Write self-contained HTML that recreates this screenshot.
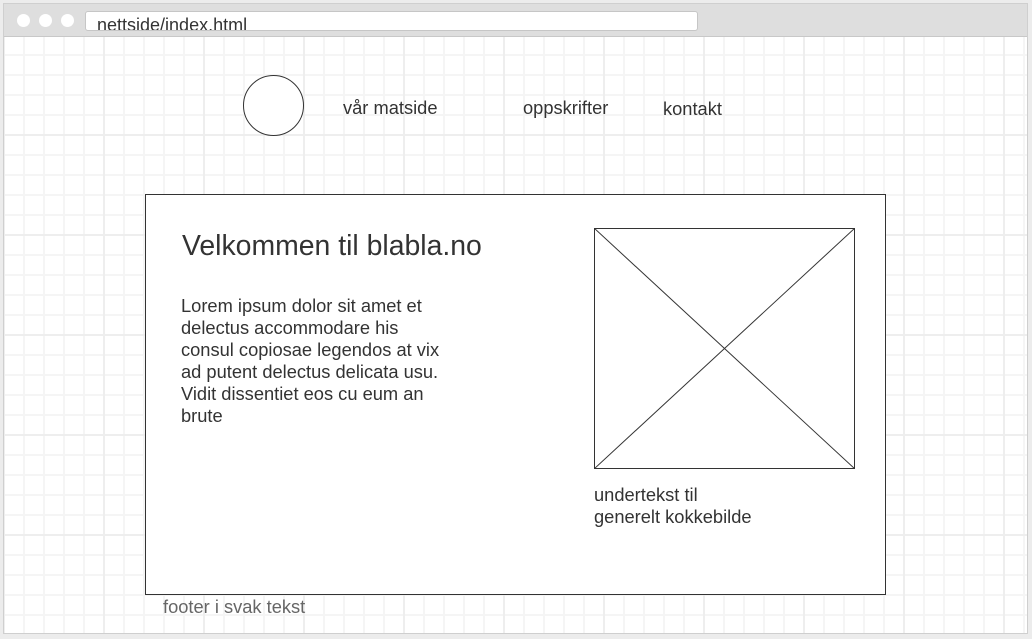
<!DOCTYPE html>
<html><head><style>
html,body{margin:0;padding:0;}
body{width:1032px;height:639px;background:#ececec;position:relative;overflow:hidden;font-family:"Liberation Sans",sans-serif;color:#333;}
.win{position:absolute;left:3px;top:3px;width:1025px;height:631px;border:1px solid #cfcfcf;box-sizing:border-box;background:#fff;overflow:hidden;}
.bar{position:absolute;left:0;top:0;right:0;height:32px;background:#dedede;border-bottom:1px solid #c8c8c8;}
.dot{position:absolute;top:10px;width:13px;height:13px;border-radius:50%;background:#fff;}
.url{position:absolute;left:81px;top:7px;width:613px;height:20px;background:#fff;border:1px solid #c6c6c6;border-radius:3px;box-sizing:border-box;font-size:18px;line-height:26px;padding-left:11px;overflow:hidden;color:#333;}
.grid{position:absolute;left:0;top:33px;right:0;bottom:0;
background-image:
linear-gradient(to right,#eeeeee 2px,transparent 2px),
linear-gradient(to bottom,#eeeeee 2px,transparent 2px),
linear-gradient(to right,#f5f5f5 2px,transparent 2px),
linear-gradient(to bottom,#f5f5f5 2px,transparent 2px);
background-size:100px 100px,100px 100px,20px 20px,20px 20px;
background-position:99px -2px,0 97px,19px 0,0 17px;}
.t{position:absolute;font-size:18.3px;white-space:nowrap;}
</style></head><body>
<div class="win">
<div class="bar">
<div class="dot" style="left:13px"></div><div class="dot" style="left:35px"></div><div class="dot" style="left:57px"></div>
<div class="url">nettside/index.html</div>
</div>
<div class="grid"></div>
</div>
<div style="position:absolute;left:243px;top:75px;width:59px;height:59px;border:1px solid #333;border-radius:50%;background:#fff"></div>
<div class="t" style="left:343px;top:97px">vår matside</div>
<div class="t" style="left:523px;top:97px">oppskrifter</div>
<div class="t" style="left:663px;top:98px">kontakt</div>
<div style="position:absolute;left:145px;top:194px;width:741px;height:401px;border:1px solid #333;box-sizing:border-box;background:#fff"></div>
<div class="t" style="left:182px;top:230px;font-size:28.4px">Velkommen til blabla.no</div>
<div class="t" style="left:181px;top:295px;line-height:22px;white-space:normal;width:268px">Lorem ipsum dolor sit amet et delectus accommodare his consul copiosae legendos at vix ad putent delectus delicata usu. Vidit dissentiet eos cu eum an brute</div>
<svg style="position:absolute;left:594px;top:228px" width="261" height="241"><rect x="0.5" y="0.5" width="260" height="240" fill="#fff" stroke="#333"/><line x1="0" y1="0" x2="261" y2="241" stroke="#333"/><line x1="261" y1="0" x2="0" y2="241" stroke="#333"/></svg>
<div class="t" style="left:594px;top:484px;line-height:22px">undertekst til<br>generelt kokkebilde</div>
<div class="t" style="left:163px;top:596px;color:#666">footer i svak tekst</div>
</body></html>
